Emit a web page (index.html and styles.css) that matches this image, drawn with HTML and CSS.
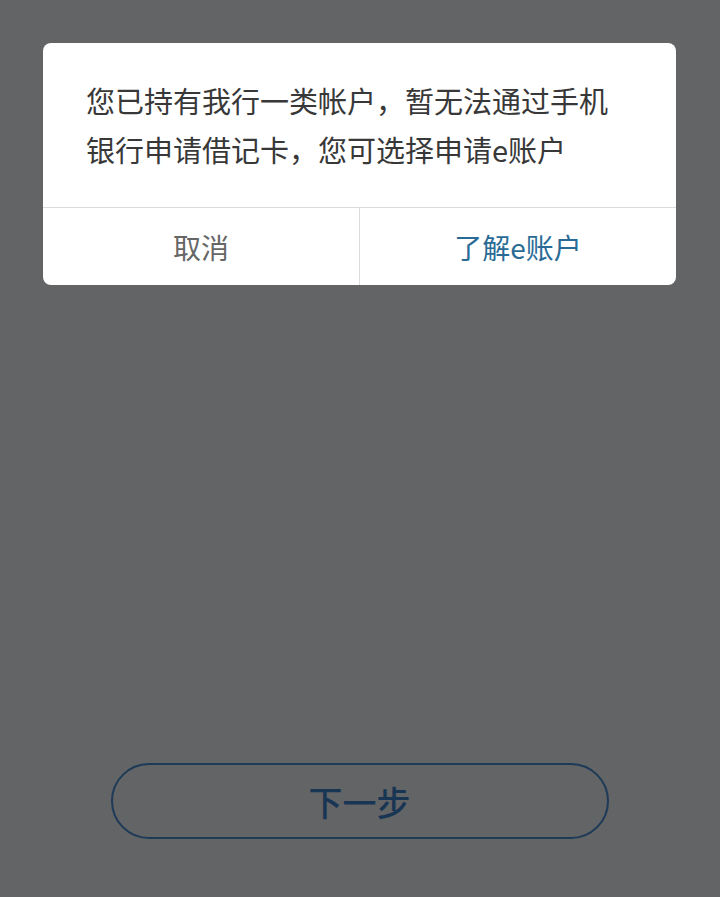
FILE: index.html
```html
<!DOCTYPE html>
<html>
<head>
  <meta charset="UTF-8">
  <title>提示</title>
  <link rel="stylesheet" href="styles.css">
</head>
<body>
  <div class="page">
    <div class="dialog">
      <p class="dialog-message">您已持有我行一类帐户，暂无法通过手机银行申请借记卡，您可选择申请e账户</p>
      <div class="dialog-actions">
        <button class="dialog-btn cancel">取消</button>
        <button class="dialog-btn confirm">了解e账户</button>
      </div>
    </div>

    <button class="next-btn">下一步</button>
  </div>
</body>
</html>
```

FILE: styles.css
```css
html, body {
  margin: 0;
  padding: 0;
  height: 100%;
}
body {
  font-family: "Noto Sans CJK SC", "Noto Sans", sans-serif;
  background-color: #636466;
  color: #333;
}
.page {
  display: flex;
  flex-direction: column;
  align-items: center;
  padding: 43px 44px 0 43px;
}
.dialog {
  width: 633px;
  background-color: #fff;
  border-radius: 8px;
  overflow: hidden;
}
.dialog-message {
  margin: 0;
  padding: 33px 60px 33px 43px;
  font-size: 29px;
  line-height: 49px;
  color: #383838;
  word-break: break-all;
}
.dialog-actions {
  display: flex;
  border-top: 1px solid #dcdcdc;
  height: 77px;
}
.dialog-btn {
  flex: 1;
  background: none;
  border: none;
  font-family: inherit;
  font-size: 28px;
  padding: 0;
  cursor: pointer;
}
.dialog-btn.cancel {
  color: #666;
  border-right: 1px solid #dcdcdc;
}
.dialog-btn.confirm {
  color: #2a6b96;
}
.next-btn {
  margin-top: 478px;
  width: 498px;
  height: 76px;
  border: 2px solid #1d3a57;
  border-radius: 38px;
  background: transparent;
  font-family: inherit;
  font-size: 34px;
  font-weight: 500;
  color: #183553;
  cursor: pointer;
}
```
